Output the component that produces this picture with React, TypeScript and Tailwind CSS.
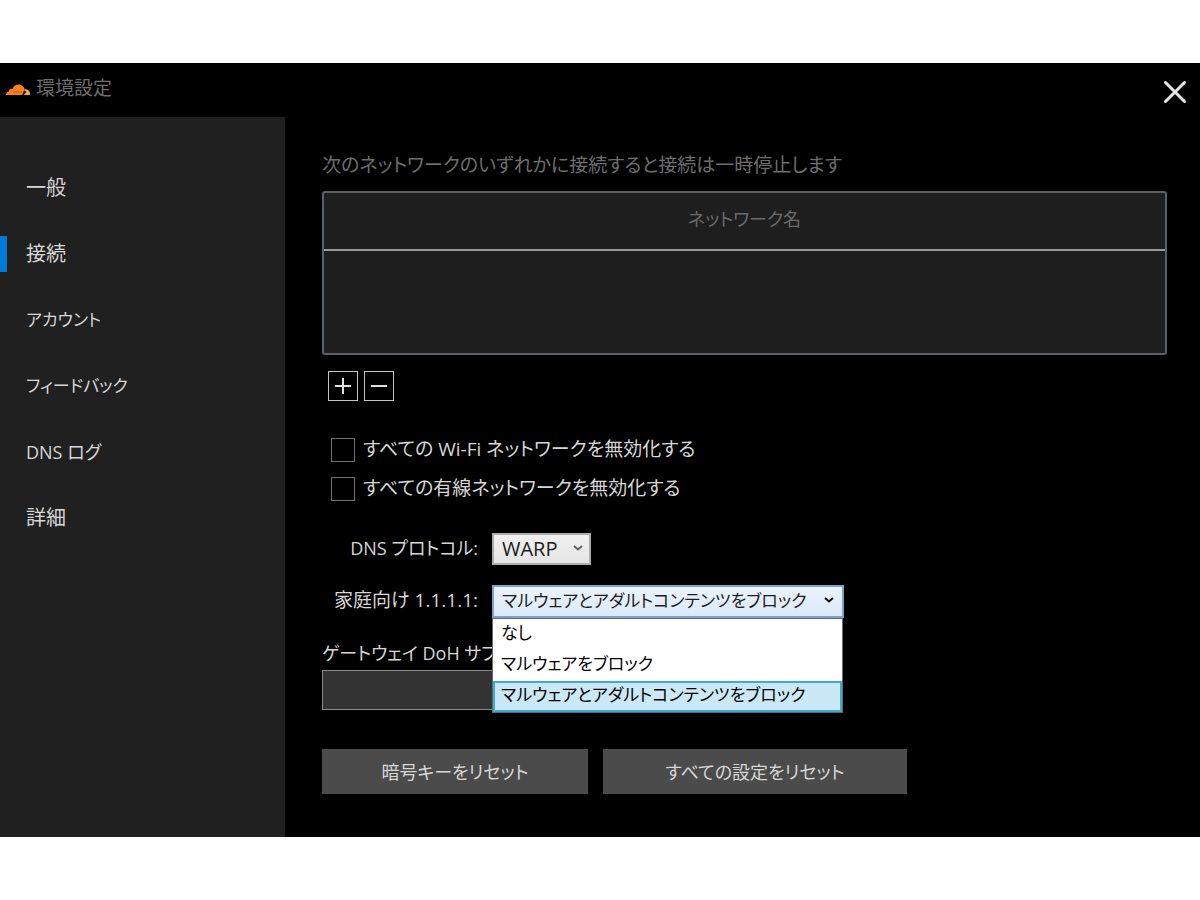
import React, { useState } from "react";
import clsx from "clsx";

const navItems = [
  { label: "一般", size: "text-xl" },
  { label: "接続", size: "text-xl" },
  { label: "アカウント", size: "text-[17px]" },
  { label: "フィードバック", size: "text-[17px]" },
  { label: "DNS ログ", size: "text-lg" },
  { label: "詳細", size: "text-xl" },
];

const familyOptions = [
  "なし",
  "マルウェアをブロック",
  "マルウェアとアダルトコンテンツをブロック",
];

function CloudLogo() {
  return (
    <svg viewBox="0 0 48 24" className="h-3 w-6 shrink-0" aria-hidden="true">
      <path
        d="M0 22c0-4 2-7 6-7-.5-4 3-7 7-5C15 4 19 1 25 1c7 0 12 5 13 11l-3 10H0Z"
        fill="#f6821f"
      />
      <path d="M38 10.500c6 0 10 4 10 9.500 0 1-.3 2-.6 2H35l3-11.500Z" fill="#fbad41" />
      <path d="M14 15h18v2H14Z" fill="#b85a12" />
      <path d="M34 18l2-5 3 1 2 3-3 2-2 3h-4Z" fill="#2a1606" />
    </svg>
  );
}

function Chevron({ className }: { className: string }) {
  return (
    <svg
      viewBox="0 0 10 6"
      className={clsx("pointer-events-none absolute h-1.5 w-2.5", className)}
      fill="none"
      stroke="currentColor"
      strokeWidth="2"
      aria-hidden="true"
    >
      <path d="M1 1l4 3.500L9 1" />
    </svg>
  );
}

function NetworkCheckbox({ id, label }: { id: string; label: string }) {
  return (
    <div className="flex h-[39px] items-center gap-2">
      <input
        id={id}
        type="checkbox"
        className="size-6 shrink-0 appearance-none border border-[#707070] bg-black checked:bg-[#0078d7]"
      />
      <label htmlFor={id} className="pb-0.5 text-[19px]">{label}</label>
    </div>
  );
}

export default function App() {
  const [active, setActive] = useState("接続");
  const [family, setFamily] = useState(familyOptions[2]);

  return (
    <div className="min-h-screen bg-white py-[63px] font-['Open_Sans','Noto_Sans_CJK_JP',sans-serif] text-lg leading-6 text-[#d6d6d6] [font-feature-settings:'palt']">
      <div className="bg-black">
        <header className="flex h-[54px] items-center justify-between pr-3 pl-1.5">
          <div className="flex items-center gap-1.5">
            <CloudLogo />
            <h1 className="pb-1 text-[19px] text-[#6e6e6e]">環境設定</h1>
          </div>
          <button type="button" aria-label="閉じる" className="pt-1 text-[#e8e8e8]">
            <svg viewBox="0 0 26 26" className="size-[26px]" stroke="currentColor" strokeWidth="3" strokeLinecap="round" aria-hidden="true">
              <path d="M3.500 3.500l19 19M22.500 3.500l-19 19" />
            </svg>
          </button>
        </header>

        <div className="flex">
          <nav className="w-[285px] shrink-0 bg-[#202020] pt-[38px]">
            <ul>
              {navItems.map(({ label, size }) => (
                <li key={label}>
                  <button
                    type="button"
                    onClick={() => setActive(label)}
                    className="flex h-[66px] w-full items-center gap-[19px] text-left"
                  >
                    <span className={clsx("h-9 w-[7px]", active === label && "bg-[#0078d7]")} />
                    <span className={size}>{label}</span>
                  </button>
                </li>
              ))}
            </ul>
          </nav>

          <main className="min-w-0 flex-1 pt-9 pr-[33px] pb-[43px] pl-[37px]">
            <p className="text-[19px] text-[#6e6e6e]">次のネットワークのいずれかに接続すると接続は一時停止します</p>

            <div className="mt-[14px] h-[164px] rounded-[3px] border-2 border-[#5b5f66] bg-[#1e1e1e]">
              <table className="w-full border-collapse">
                <thead>
                  <tr className="h-[57px] border-b-2 border-[#9a9a9a]">
                    <th className="pb-1 text-lg font-normal text-[#6a6a6a]">ネットワーク名</th>
                  </tr>
                </thead>
                <tbody />
              </table>
            </div>

            <div className="mt-4 flex gap-1.5 pl-1.5 text-[#e0e0e0]">
              <button type="button" aria-label="追加" className="flex size-[30px] items-center justify-center border border-[#c4c4c4]">
                <svg viewBox="0 0 16 16" className="size-4" stroke="currentColor" strokeWidth="2" aria-hidden="true">
                  <path d="M0 8h16M8 0v16" />
                </svg>
              </button>
              <button type="button" aria-label="削除" className="flex size-[30px] items-center justify-center border border-[#c4c4c4]">
                <svg viewBox="0 0 16 16" className="size-4" stroke="currentColor" strokeWidth="2" aria-hidden="true">
                  <path d="M0 8h16" />
                </svg>
              </button>
            </div>

            <div className="mt-[29px] pl-[9px]">
              <NetworkCheckbox id="wifi" label="すべての Wi-Fi ネットワークを無効化する" />
              <NetworkCheckbox id="wired" label="すべての有線ネットワークを無効化する" />
            </div>

            <div className="mt-[25px] grid grid-cols-[156px_1fr] items-center gap-x-[14px] gap-y-5">
              <label htmlFor="protocol" className="pb-0.5 text-right whitespace-nowrap">DNS プロトコル:</label>
              <div className="relative w-[99px]">
                <select id="protocol" className="block h-8 w-full appearance-none border-2 border-[#acacac] bg-linear-to-b from-[#f0f0f0] to-[#e5e5e5] pl-2 text-xl leading-6 text-[#1c1c1c]">
                  <option>WARP</option>
                </select>
                <Chevron className="top-3 right-2 text-[#606060]" />
              </div>

              <label htmlFor="family" className="pb-1 text-right text-[19px] whitespace-nowrap">家庭向け 1.1.1.1:</label>
              <div className="relative w-[352px]">
                <select
                  id="family"
                  value={family}
                  onChange={(e) => setFamily(e.target.value)}
                  className="block h-[33px] w-full appearance-none border-2 border-[#7da2ce] bg-linear-to-b from-[#ebf3fc] to-[#dbe9f9] pb-0.5 pl-2 text-[17px] text-[#1c1c1c]"
                >
                  {familyOptions.map((o) => (
                    <option key={o}>{o}</option>
                  ))}
                </select>
                <Chevron className="top-3 right-2.5 text-black" />
                <ul role="listbox" aria-label="家庭向け 1.1.1.1" className="absolute top-full left-0 z-10 w-[351px] border border-[#686868] bg-white text-[17px] text-black">
                  {familyOptions.map((o) => (
                    <li
                      key={o}
                      role="option"
                      aria-selected={o === family}
                      onClick={() => setFamily(o)}
                      className={clsx(
                        "flex h-[31px] items-center border-2 pb-1 pl-1.5 whitespace-nowrap",
                        o === family ? "border-[#3fa9d8] bg-[#cbe8f6]" : "border-transparent"
                      )}
                    >
                      {o}
                    </li>
                  ))}
                </ul>
              </div>
            </div>

            <div className="mt-[23px] w-[500px]">
              <label htmlFor="doh" className="block">ゲートウェイ DoH サブ</label>
              <input id="doh" type="text" className="mt-[5px] block h-10 w-full border border-[#8a8a8a] bg-[#333333] px-2" />
            </div>

            <div className="mt-[39px] flex gap-[15px]">
              <button type="button" className="h-[45px] w-[266px] bg-[#4b4b4b]">暗号キーをリセット</button>
              <button type="button" className="h-[45px] w-[304px] bg-[#4b4b4b]">すべての設定をリセット</button>
            </div>
          </main>
        </div>
      </div>
    </div>
  );
}
